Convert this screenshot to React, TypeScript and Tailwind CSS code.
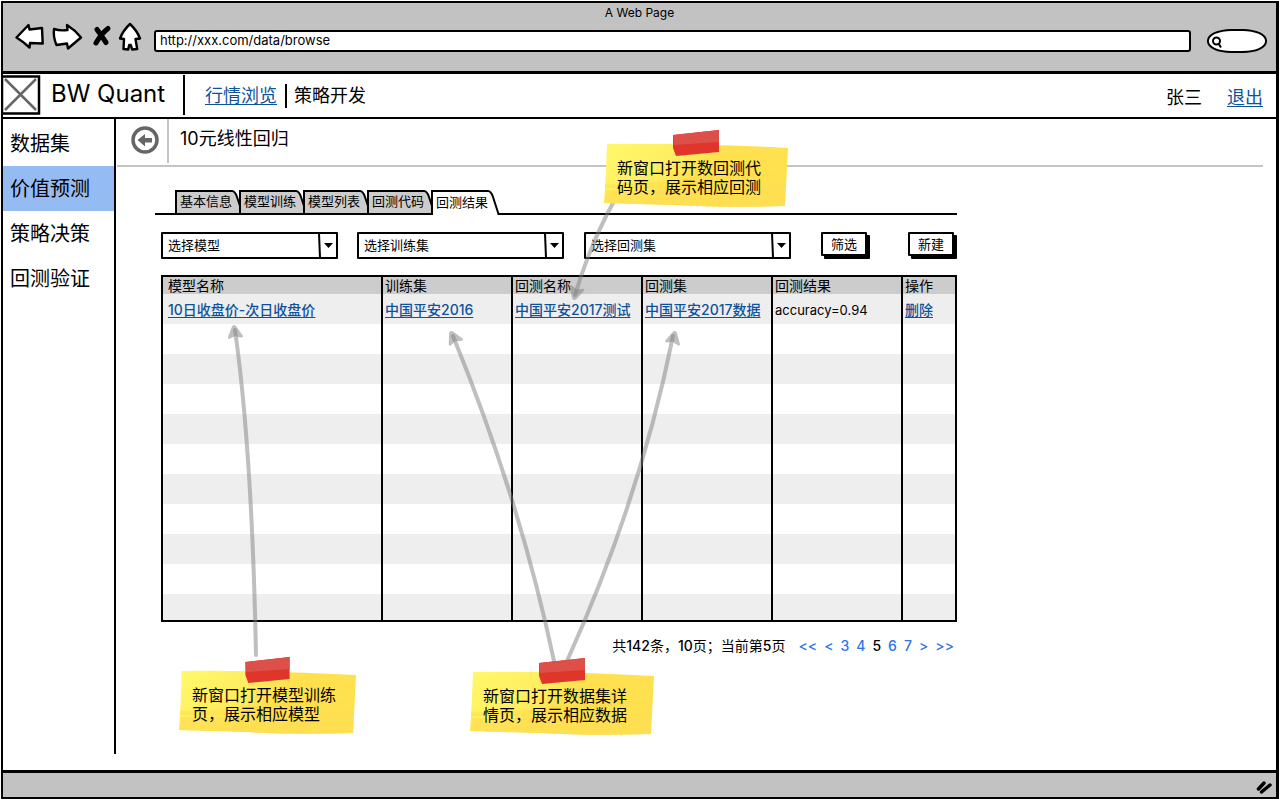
import type { ReactNode } from 'react';

const FONT = "font-['Inter','Noto_Sans_CJK_SC',sans-serif]";

function ChromeIcon({ label, width, box, children }: { label: string; width: string; box: string; children: ReactNode }) {
  return (
    <button type="button" aria-label={label} className={`h-7 shrink-0 ${width}`}>
      <svg viewBox={box} className="h-7 w-full overflow-visible" fill="#fff" stroke="#000" strokeWidth="2.4" strokeLinejoin="round" strokeLinecap="round">
        {children}
      </svg>
    </button>
  );
}

function BrowserBar() {
  return (
    <header className="border-b-[3px] border-black bg-[#c2c2c2]">
      <h1 className="h-5 text-center text-xs leading-5">A Web Page</h1>
      <div className="flex h-12 items-start gap-[9px] pr-[9px] pl-[13px]">
        <ChromeIcon label="Back" width="w-7" box="16 23 28 28">
          <path d="M16.500 37.500 28.500 25l1 4.500L42 28l.7 15.500-12.700-.5-.5 4.500Q23 41.500 16.500 37.500Z" />
        </ChromeIcon>
        <ChromeIcon label="Forward" width="w-[30px]" box="53 23 30 28">
          <path d="M54 29Q60 31 67.500 30L67 25q8 5 14 12.500L68 48.500l-1-5L56.500 45Q53 37 54 29Z" />
        </ChromeIcon>
        <ChromeIcon label="Stop" width="w-[19px]" box="92 23 19 28">
          <path d="M97 29.500Q101 35 106 42.500M108 28.500Q101 34 96 43" strokeWidth="5" fill="none" />
        </ChromeIcon>
        <ChromeIcon label="Home" width="w-[25px]" box="120 23 25 28">
          <path d="M130 24Q137 30.500 140 38.500L135.500 39l1.700 10-5 .5-1.500-4.500h-1.500l-1 4.500-4.700-.5.500-10-4-.5Q123 30.500 130 24Z" />
        </ChromeIcon>
        <input
          type="text"
          aria-label="Address"
          defaultValue="http://xxx.com/data/browse"
          className="mt-[7px] h-[22px] min-w-0 flex-1 rounded-[3px] border-2 border-black bg-white px-1 pb-[2px] text-[13px] outline-none"
        />
        <div className="relative mt-[6px] ml-[7px] h-6 w-[60px] shrink-0">
          <input type="search" aria-label="Search" className="h-full w-full rounded-[40%/48%] border-2 border-black bg-white pl-5 outline-none" />
          <svg viewBox="0 0 12 14" className="absolute top-[7px] left-[4px] h-[14px] w-3" fill="none" stroke="#000" strokeWidth="2">
            <circle cx="5.500" cy="5" r="3.500" />
            <path d="m7.500 7.500 2.500 4" />
          </svg>
        </div>
      </div>
    </header>
  );
}

function SiteHeader() {
  return (
    <div className="flex h-[45px] items-start border-b-2 border-black text-lg">
      <svg viewBox="0 0 38 42" className="h-[42px] w-[38px] shrink-0" fill="none">
        <path d="m2 5 31 31M33 5 2 36" stroke="#666" strokeWidth="2.500" />
        <rect x="-1" y="2.500" width="37" height="37" stroke="#000" strokeWidth="2.500" />
      </svg>
      <div className="ml-[10px] w-[132px] text-2xl leading-10">BW Quant</div>
      <span className="mt-px h-10 w-[2px] bg-black" />
      <nav className="ml-5 flex h-11 items-center">
        <a href="#market" className="text-[#0d539c] underline underline-offset-2">行情浏览</a>
        <span className="mr-[7px] ml-2 h-6 w-[2px] bg-black" />
        <a href="#strategy">策略开发</a>
      </nav>
      <div className="mr-[13px] ml-auto flex h-11 items-center gap-[25px] pt-[3px]">
        <span>张三</span>
        <a href="#logout" className="text-[#0d539c] underline underline-offset-2">退出</a>
      </div>
    </div>
  );
}

const menu = ['数据集', '价值预测', '策略决策', '回测验证'];

function Sidebar() {
  return (
    <nav className="mb-4 w-[113px] shrink-0 border-r-2 border-black pt-[2px] text-xl">
      {menu.map((item, i) => (
        <a key={item} href={`#menu-${i}`} className={`flex h-[45px] items-center pl-[7px] ${i === 1 ? 'bg-[#95bbf3]' : ''}`}>
          {item}
        </a>
      ))}
    </nav>
  );
}

const tabs = ['基本信息', '模型训练', '模型列表', '回测代码', '回测结果'];

function Tabs() {
  return (
    <div role="tablist" className="ml-[-6px] flex h-[26px] border-b-2 border-black pl-5">
      {tabs.map((tab, i) => {
        const active = i === tabs.length - 1;
        return (
          <button key={tab} type="button" role="tab" aria-selected={active} className={`relative h-[26px] w-16 shrink-0 pl-[5px] text-left text-[13px] ${active ? 'pt-[2px]' : ''}`}>
            <svg viewBox="0 0 70 26" className="absolute top-0 left-0 h-[26px] w-[70px]" fill={active ? '#fff' : '#ccc'} stroke="#000" strokeWidth="2">
              {active ? (
                <>
                  <path d="M2 23h63l2 3H2Z" stroke="none" />
                  <path d="M1 26V2h56q3 0 5 6l5.500 17" />
                </>
              ) : (
                <path d="M1 25V2h56q3 0 5 6l3 9v8Z" />
              )}
            </svg>
            <span className="relative">{tab}</span>
          </button>
        );
      })}
    </div>
  );
}

function Dropdown({ label, width }: { label: string; width: string }) {
  return (
    <div className={`relative h-[27px] shrink-0 ${width}`}>
      <select aria-label={label} className="h-full w-full appearance-none rounded-[1px] border-2 border-black bg-white pl-[5px] text-[13px] outline-none">
        <option>{label}</option>
      </select>
      <svg viewBox="0 0 20 27" className="pointer-events-none absolute top-0 right-0 h-[27px] w-5">
        <path d="M1 1.500 2 25.500" stroke="#000" strokeWidth="2" />
        <path d="M6 11h9l-4.500 5Z" />
      </svg>
    </div>
  );
}

function PushButton({ children }: { children: ReactNode }) {
  return (
    <button type="button" className="h-6 w-[46px] rounded-[1px] border-2 border-black bg-white text-[13px] leading-5 shadow-[3px_3px_0_#000]">
      {children}
    </button>
  );
}

const columns = ['模型名称', '训练集', '回测名称', '回测集', '回测结果', '操作'];
const record = ['10日收盘价-次日收盘价', '中国平安2016', '中国平安2017测试', '中国平安2017数据', 'accuracy=0.94', '删除'];
const blankRows = Array.from({ length: 10 }, (_, i) => i);

const cellEdge = (i: number) => (i === 0 ? 'pl-[5px]' : 'border-l-2 border-black pl-[2px]');

function ResultTable() {
  return (
    <div className="mt-4 border-2 border-black">
      <table className="w-full table-fixed border-separate border-spacing-0 text-sm">
        <colgroup>
          <col className="w-[218px]" />
          <col className="w-[130px]" />
          <col className="w-[130px]" />
          <col className="w-[130px]" />
          <col className="w-[130px]" />
          <col />
        </colgroup>
        <thead>
          <tr className="bg-[#ccc]">
            {columns.map((name, i) => (
              <th key={name} className={`h-[17px] p-0 text-left leading-[17px] font-normal ${cellEdge(i)}`}>{name}</th>
            ))}
          </tr>
        </thead>
        <tbody>
          <tr className="bg-[#eee]">
            {record.map((value, i) => (
              <td key={value} className={`h-[30px] p-0 pt-px whitespace-nowrap ${cellEdge(i)}`}>
                {i === 4 ? (
                  <span className="text-[13px]">{value}</span>
                ) : (
                  <a href={`#record-${i}`} className="font-medium text-[#0d539c] underline underline-offset-2">{value}</a>
                )}
              </td>
            ))}
          </tr>
          {blankRows.map((row) => (
            <tr key={row} className={row % 2 === 1 ? 'bg-[#eee]' : ''}>
              {columns.map((name, i) => (
                <td key={name} className={`p-0 ${row === 9 ? 'h-[26px]' : 'h-[30px]'} ${cellEdge(i)}`} />
              ))}
            </tr>
          ))}
        </tbody>
      </table>
    </div>
  );
}

const pages = ['<<', '<', '3', '4', '5', '6', '7', '>', '>>'];

function Pager() {
  return (
    <div className="mt-[14px] flex items-center justify-end pr-[3px] text-sm leading-5">
      <span>共<b className="font-medium">142</b>条，<b className="font-medium">10</b>页；当前第<b className="font-medium">5</b>页</span>
      <nav className="ml-[13px] flex gap-[7px] font-medium">
        {pages.map((page) => (
          <a key={page} href="#page" className={page === '5' ? 'text-black' : 'text-[#2f74e8]'}>{page}</a>
        ))}
      </nav>
    </div>
  );
}

function Note({ place, lines }: { place: string; lines: string[] }) {
  return (
    <div className={`absolute h-[78px] ${place}`}>
      <svg viewBox="0 0 184 78" preserveAspectRatio="none" className="absolute inset-0 h-full w-full">
        <defs>
          <linearGradient id="paper" x1="0" y1="0" x2="1" y2="0.400">
            <stop offset="0" stopColor="#fff96b" />
            <stop offset="0.450" stopColor="#ffec5f" />
            <stop offset="0.600" stopColor="#ffe04f" />
          </linearGradient>
        </defs>
        <path d="M3 14Q90 13 184 18l-3 58q-60 2-110-1L0 73Q2 45 3 14Z" fill="url(#paper)" />
        <path d="M1 54q60 0 130-12l48 3q-70 2-110 14L1 58Z" fill="#ffdc48" opacity=".5" />
        <path d="M2 60q60 2 178-8l1 24q-60 2-110-1L0 73Z" fill="#ffdf52" opacity=".8" />
        <path d="M69 5 115 0v22L72 26 69 18Z" fill="#e0352b" />
        <path d="M69 5 115 0v12L70 15Z" fill="#dd5049" />
      </svg>
      <p className="relative pt-[29px] pl-[13px] text-base leading-[19px] whitespace-nowrap">
        {lines[0]}
        <br />
        {lines[1]}
      </p>
    </div>
  );
}

const arrows = [
  { line: 'M256 655Q252 450 235 330', head: 'translate(234 326) rotate(-6)' },
  { line: 'M554 661Q520 500 453 336', head: 'translate(451 332) rotate(-24)' },
  { line: 'M567 661Q640 500 673 336', head: 'translate(675 332) rotate(14)' },
  { line: 'M613 203Q590 245 575 295', head: 'translate(574 299) rotate(196)' },
];

function Arrows() {
  return (
    <svg viewBox="117 119 840 640" className="pointer-events-none absolute top-0 left-0 h-[640px] w-[840px]" fill="none">
      {arrows.map(({ line, head }) => (
        <g key={line}>
          <path d={line} stroke="#808080" strokeOpacity=".5" strokeWidth="4" strokeLinecap="round" />
          <path transform={head} d="M0-1Q2-1 3 2L8 11Q8 13 5 12L0 10-5 12Q-8 13-7 10L-3 2Q-2-1 0-1Z" fill="#808080" fillOpacity=".5" />
        </g>
      ))}
    </svg>
  );
}

export default function App() {
  return (
    <div className={`flex min-h-screen flex-col bg-white p-px text-black ${FONT}`}>
      <div className="flex flex-1 flex-col border-2 border-r-[3px] border-black">
        <BrowserBar />
        <SiteHeader />
        <div className="flex flex-1">
          <Sidebar />
          <main className="relative ml-px min-w-0 flex-1">
            <div className="mr-[13px] flex h-12 border-b-2 border-[#c4c4c4]">
              <a href="#back" aria-label="Back" className="mt-[7px] ml-[14px] h-7 w-7">
                <svg viewBox="0 0 28 28" className="h-7 w-7" fill="none">
                  <circle cx="14" cy="14" r="12" stroke="#666" strokeWidth="3.500" />
                  <path d="M6.500 14 14 8v4h7v4.500h-7v4Z" fill="#666" />
                </svg>
              </a>
              <span className="ml-2 h-11 w-[2px] bg-[#c4c4c4]" />
              <h2 className="ml-[11px] text-lg leading-10">10元线性回归</h2>
            </div>
            <div className="mt-[22px] ml-11 max-w-[796px]">
              <Tabs />
              <div className="mt-[17px] flex">
                <Dropdown label="选择模型" width="w-[177px]" />
                <span className="w-[19px]" />
                <Dropdown label="选择训练集" width="w-[207px]" />
                <span className="w-5" />
                <Dropdown label="选择回测集" width="w-[207px]" />
                <div className="ml-[30px] flex flex-1 justify-between pr-[3px]">
                  <PushButton>筛选</PushButton>
                  <PushButton>新建</PushButton>
                </div>
              </div>
              <ResultTable />
              <Pager />
            </div>
            <Arrows />
            <Note place="top-[11px] left-[487px] w-[184px]" lines={['新窗口打开数回测代', '码页，展示相应回测']} />
            <Note place="top-[538px] left-[62px] w-[177px]" lines={['新窗口打开模型训练', '页，展示相应模型']} />
            <Note place="top-[539px] left-[353px] w-[184px]" lines={['新窗口打开数据集详', '情页，展示相应数据']} />
          </main>
        </div>
        <footer className="flex h-[27px] items-end justify-end border-t-[3px] border-black bg-[#c2c2c2] pr-1 pb-[3px]">
          <svg viewBox="0 0 16 14" className="h-[14px] w-4" stroke="#000" strokeWidth="3.500" strokeLinecap="round">
            <path d="M2.500 9 8 3M5.500 12 14 5" />
          </svg>
        </footer>
      </div>
    </div>
  );
}
